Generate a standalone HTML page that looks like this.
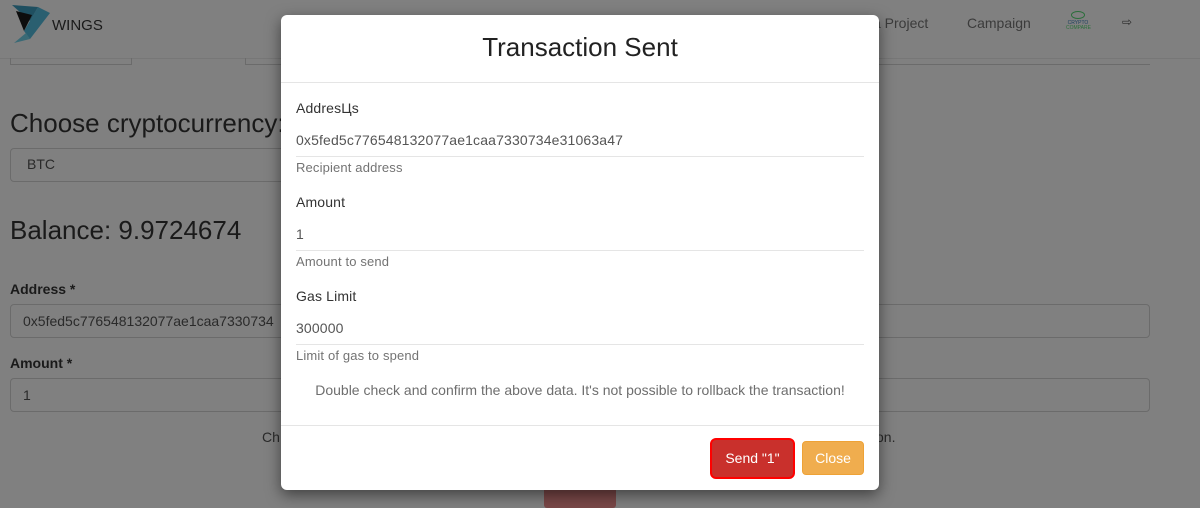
<!DOCTYPE html>
<html><head><meta charset="utf-8"><style>
*{box-sizing:border-box;margin:0;padding:0}
body{width:1200px;height:504px;overflow:hidden;background:#808080;font-family:"Liberation Sans",sans-serif;position:relative;color:#1a1a1a}
.a{position:absolute;white-space:nowrap}
.inp{position:absolute;border:1px solid #6b6b6b;border-radius:4px;background:#808080}
.modal{position:absolute;left:281px;top:15px;width:598px;height:475px;background:#fff;border-radius:6px;box-shadow:0 5px 15px rgba(0,0,0,.5)}
.m{position:absolute;white-space:nowrap;font-size:14px;letter-spacing:0.15px}
.ln{position:absolute;left:15px;width:568px;height:1px;background:#e5e5e5}
</style></head><body>
<svg class="a" style="left:10px;top:3px" width="46" height="42" viewBox="0 0 46 42"><polygon points="2,2 28,4 20,18" fill="#1f4f60"/><polygon points="6,8 22,12 14,28" fill="#0d0d0d"/><polygon points="28,4 40,10 20,36 14,28" fill="#2a5f70"/><polygon points="20,36 4,40 16,30" fill="#3a6a76"/></svg>
<div class="a" style="left:52px;top:17px;font-size:15px;color:#1a1a1a">WINGS</div>
<div class="a" style="left:873px;top:15px;font-size:14px;color:#3b3b3b">a Project</div>
<div class="a" style="left:967px;top:15px;font-size:14px;color:#3b3b3b">Campaign</div>
<div class="a" style="left:1066px;top:11px;width:24px;height:24px;font-size:5px;color:#1a3f5e;text-align:center;line-height:5px"><div style="width:14px;height:8px;border:1px solid #2a6e3a;border-radius:50%;margin:0 auto 2px"></div>CRYPTO<br><span style="color:#2a6e3a">COMPARE</span></div>
<div class="a" style="left:1122px;top:15px;font-size:12px;color:#2a2a2a">⇨</div>
<div class="a" style="left:0;top:58px;width:1200px;height:1px;background:#777"></div>
<div class="a" style="left:10px;top:58px;width:122px;height:7px;border:1px solid #6b6b6b;border-top:none"></div>
<div class="a" style="left:245px;top:58px;width:905px;height:7px;border-left:1px solid #6b6b6b;border-bottom:1px solid #6b6b6b"></div>
<div class="a" style="left:10px;top:108px;font-size:26px">Choose cryptocurrency:</div>
<div class="inp" style="left:10px;top:148px;width:290px;height:34px"></div>
<div class="a" style="left:27px;top:156px;font-size:14px;color:#2a2a2a">BTC</div>
<div class="a" style="left:10px;top:215px;font-size:26px">Balance: 9.9724674</div>
<div class="a" style="left:10px;top:281px;font-size:14px;font-weight:bold">Address *</div>
<div class="inp" style="left:10px;top:304px;width:1140px;height:34px"></div>
<div class="a" style="left:23px;top:313px;font-size:14px;color:#2a2a2a">0x5fed5c776548132077ae1caa7330734</div>
<div class="a" style="left:10px;top:355px;font-size:14px;font-weight:bold">Amount *</div>
<div class="inp" style="left:10px;top:378px;width:1140px;height:34px"></div>
<div class="a" style="left:23px;top:387px;font-size:14px;color:#2a2a2a">1</div>
<div class="a" style="left:262px;top:429px;font-size:14px;color:#2a2a2a">Ch</div>
<div class="a" style="left:876px;top:429px;font-size:14px;color:#2a2a2a">on.</div>
<div class="a" style="left:544px;top:478px;width:72px;height:30px;background:#7a4848;border-radius:3px"></div>
<div class="modal">
<div class="m" style="left:0;width:598px;text-align:center;top:17px;font-size:26px;color:#222;letter-spacing:0">Transaction Sent</div>
<div class="ln" style="left:0;width:598px;top:67px"></div>
<div class="m" style="left:15px;top:85px;color:#333">AddresЦs</div>
<div class="m" style="left:15px;top:117px;color:#555">0x5fed5c776548132077ae1caa7330734e31063a47</div>
<div class="ln" style="top:141px"></div>
<div class="m" style="left:15px;top:145px;font-size:13px;color:#737373">Recipient address</div>
<div class="m" style="left:15px;top:179px;color:#333">Amount</div>
<div class="m" style="left:15px;top:211px;color:#555">1</div>
<div class="ln" style="top:235px"></div>
<div class="m" style="left:15px;top:239px;font-size:13px;color:#737373">Amount to send</div>
<div class="m" style="left:15px;top:273px;color:#333">Gas Limit</div>
<div class="m" style="left:15px;top:305px;color:#555">300000</div>
<div class="ln" style="top:329px"></div>
<div class="m" style="left:15px;top:333px;font-size:13px;color:#737373">Limit of gas to spend</div>
<div class="m" style="left:0;width:598px;text-align:center;top:367px;color:#6e6e6e;letter-spacing:0">Double check and confirm the above data. It's not possible to rollback the transaction!</div>
<div class="ln" style="left:0;width:598px;top:410px"></div>
<div class="a" style="left:429px;top:423px;width:85px;height:41px;border:2px solid #f00;border-radius:6px;background:#c9302c;color:#fff;font-size:14px;text-align:center;line-height:37px">Send "1"</div>
<div class="a" style="left:521px;top:426px;width:62px;height:34px;background:#f0ad4e;border:1px solid #eea236;border-radius:4px;color:#fff;font-size:14px;text-align:center;line-height:32px">Close</div>
</div>
</body></html>
